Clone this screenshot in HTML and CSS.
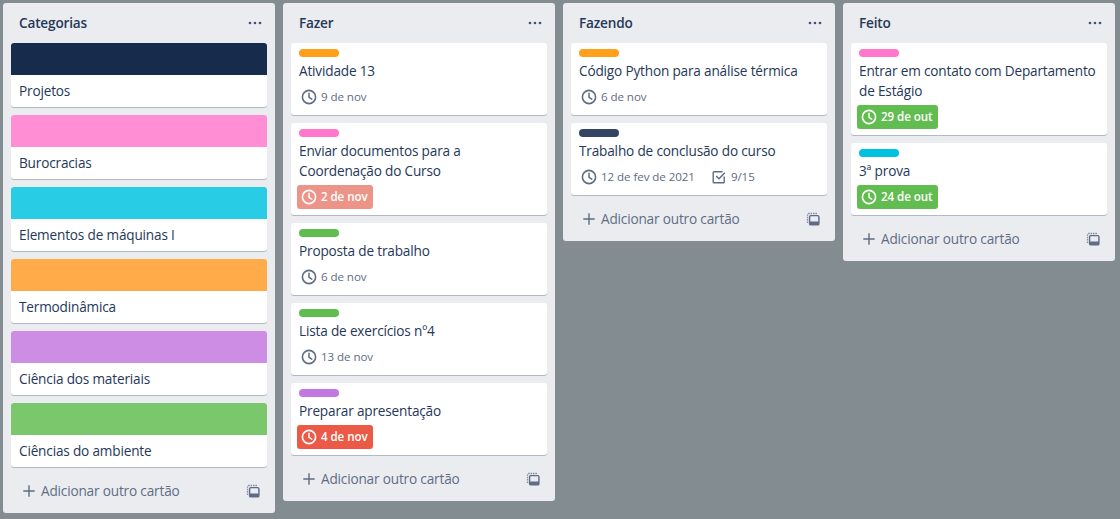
FILE: index.html
```html
<!DOCTYPE html>
<html lang="pt">
<head>
<meta charset="utf-8">
<title>Quadro</title>
<link rel="stylesheet" href="styles.css">
</head>
<body>
<svg class="defs" width="0" height="0" aria-hidden="true">
  <symbol id="clock" viewBox="0 0 16 16"><circle cx="8" cy="8" r="6.6" fill="none" stroke="currentColor" stroke-width="1.6"/><path d="M8 4.2V8.4L10.8 10.2" fill="none" stroke="currentColor" stroke-width="1.5" stroke-linecap="round" stroke-linejoin="round"/></symbol>
  <symbol id="check" viewBox="0 0 16 16"><path d="M13.2 7.5V13a.8.8 0 0 1-.8.8H3a.8.8 0 0 1-.8-.8V3.6a.8.8 0 0 1 .8-.8h8.5" fill="none" stroke="currentColor" stroke-width="1.4"/><path d="M5.2 7 8 9.8 13.8 3.8" fill="none" stroke="currentColor" stroke-width="1.5"/></symbol>
  <symbol id="plus" viewBox="0 0 16 16"><path d="M8 1.5v13M1.5 8h13" fill="none" stroke="currentColor" stroke-width="1.6"/></symbol>
  <symbol id="dots" viewBox="0 0 16 16"><circle cx="3" cy="8" r="1.35" fill="currentColor"/><circle cx="8" cy="8" r="1.35" fill="currentColor"/><circle cx="13" cy="8" r="1.35" fill="currentColor"/></symbol>
  <symbol id="tpl" viewBox="0 0 14 14"><path d="M1.5 11V2.5a1 1 0 0 1 1-1H11" fill="none" stroke="currentColor" stroke-width="1.3" stroke-dasharray="1.5 .9" opacity=".75"/><rect x="3.6" y="3.6" width="9.3" height="9.3" rx="1.2" fill="none" stroke="currentColor" stroke-width="1.4"/><rect x="3.6" y="9.6" width="9.3" height="3.3" rx=".8" fill="currentColor"/></symbol>
</svg>
<main class="board">

  <section class="list">
    <header class="list-head"><h2 class="list-title">Categorias</h2><svg class="dots"><use href="#dots"/></svg></header>
    <div class="cards">
      <article class="card"><div class="cover navy-cover"></div><p class="cover-title">Projetos</p></article>
      <article class="card"><div class="cover pink-cover"></div><p class="cover-title">Burocracias</p></article>
      <article class="card"><div class="cover sky-cover"></div><p class="cover-title">Elementos de máquinas I</p></article>
      <article class="card"><div class="cover orange-cover"></div><p class="cover-title">Termodinâmica</p></article>
      <article class="card"><div class="cover purple-cover"></div><p class="cover-title">Ciência dos materiais</p></article>
      <article class="card"><div class="cover green-cover"></div><p class="cover-title">Ciências do ambiente</p></article>
    </div>
    <footer class="list-foot"><svg class="plus"><use href="#plus"/></svg><span class="add">Adicionar outro cartão</span><svg class="tpl"><use href="#tpl"/></svg></footer>
  </section>

  <section class="list">
    <header class="list-head"><h2 class="list-title">Fazer</h2><svg class="dots"><use href="#dots"/></svg></header>
    <div class="cards">
      <article class="card body"><span class="label orange"></span><p class="title">Atividade 13</p><div class="badges"><span class="badge"><svg class="ico"><use href="#clock"/></svg>9 de nov</span></div></article>
      <article class="card body"><span class="label pink"></span><p class="title">Enviar documentos para a Coordenação do Curso</p><div class="badges"><span class="badge due soon"><svg class="ico"><use href="#clock"/></svg>2 de nov</span></div></article>
      <article class="card body"><span class="label green"></span><p class="title">Proposta de trabalho</p><div class="badges"><span class="badge"><svg class="ico"><use href="#clock"/></svg>6 de nov</span></div></article>
      <article class="card body"><span class="label green"></span><p class="title">Lista de exercícios nº4</p><div class="badges"><span class="badge"><svg class="ico"><use href="#clock"/></svg>13 de nov</span></div></article>
      <article class="card body"><span class="label purple"></span><p class="title">Preparar apresentação</p><div class="badges"><span class="badge due late"><svg class="ico"><use href="#clock"/></svg>4 de nov</span></div></article>
    </div>
    <footer class="list-foot"><svg class="plus"><use href="#plus"/></svg><span class="add">Adicionar outro cartão</span><svg class="tpl"><use href="#tpl"/></svg></footer>
  </section>

  <section class="list">
    <header class="list-head"><h2 class="list-title">Fazendo</h2><svg class="dots"><use href="#dots"/></svg></header>
    <div class="cards">
      <article class="card body"><span class="label orange"></span><p class="title">Código Python para análise térmica</p><div class="badges"><span class="badge"><svg class="ico"><use href="#clock"/></svg>6 de nov</span></div></article>
      <article class="card body"><span class="label navy"></span><p class="title">Trabalho de conclusão do curso</p><div class="badges"><span class="badge"><svg class="ico"><use href="#clock"/></svg>12 de fev de 2021</span><span class="badge"><svg class="ico"><use href="#check"/></svg>9/15</span></div></article>
    </div>
    <footer class="list-foot"><svg class="plus"><use href="#plus"/></svg><span class="add">Adicionar outro cartão</span><svg class="tpl"><use href="#tpl"/></svg></footer>
  </section>

  <section class="list">
    <header class="list-head"><h2 class="list-title">Feito</h2><svg class="dots"><use href="#dots"/></svg></header>
    <div class="cards">
      <article class="card body"><span class="label pink"></span><p class="title">Entrar em contato com Departamento de Estágio</p><div class="badges"><span class="badge due done"><svg class="ico"><use href="#clock"/></svg>29 de out</span></div></article>
      <article class="card body"><span class="label sky"></span><p class="title">3ª prova</p><div class="badges"><span class="badge due done"><svg class="ico"><use href="#clock"/></svg>24 de out</span></div></article>
    </div>
    <footer class="list-foot"><svg class="plus"><use href="#plus"/></svg><span class="add">Adicionar outro cartão</span><svg class="tpl"><use href="#tpl"/></svg></footer>
  </section>

</main>
</body>
</html>
```
FILE: styles.css
```css
* { box-sizing: border-box; }
html, body { margin: 0; height: 100%; }
body {
  background: #838c91;
  color: #253858;
  font-family: "Open Sans", "Noto Sans", sans-serif;
  font-size: 13.6px;
  letter-spacing: -0.17px;
  line-height: 20px;
  overflow: hidden;
}
.defs { position: absolute; }
.board {
  display: flex;
  align-items: flex-start;
  gap: 8px;
  padding: 3px 3px 0;
}
.list {
  width: 272px;
  flex: none;
  background: #ebecf0;
  border-radius: 3px;
}
.list-head {
  height: 40px;
  padding: 10px 12px 0 16px;
  display: flex;
  justify-content: space-between;
  align-items: flex-start;
}
.list-title {
  margin: 0;
  font-size: 13.6px;
  font-weight: 600;
  line-height: 20px;
}
.dots {
  width: 16px;
  height: 16px;
  margin-top: 2px;
  color: #42526e;
}
.cards {
  display: flex;
  flex-direction: column;
  gap: 8px;
  padding: 0 8px;
}
.card {
  background: #fff;
  border-radius: 3px;
  box-shadow: 0 1px 0 rgba(9, 30, 66, .25);
  overflow: hidden;
}
.card.body { padding: 6px 8px 6px; }
.cover { height: 32px; }
.navy-cover { background: #172b4d; }
.pink-cover { background: #ff8ed4; }
.sky-cover { background: #29cce5; }
.orange-cover { background: #ffab4a; }
.purple-cover { background: #cd8de5; }
.green-cover { background: #7bc86c; }
.cover-title { margin: 0; padding: 6px 8px; height: 32px; }
.label {
  display: block;
  width: 40px;
  height: 8px;
  border-radius: 4px;
  margin-bottom: 4px;
}
.orange { background: #ff9f1a; }
.pink { background: #ff78cb; }
.green { background: #61bd4f; }
.purple { background: #c377e0; }
.navy { background: #344563; }
.sky { background: #00c2e0; }
.title { margin: 0; }
.badges {
  display: flex;
  margin: 4px 0 0 -2px;
  gap: 4px;
}
.badge {
  display: inline-flex;
  align-items: center;
  height: 24px;
  padding: 0 4px;
  border-radius: 3px;
  font-size: 11.6px;
  letter-spacing: -0.08px;
  color: #5e6c84;
  white-space: nowrap;
}
.badge:nth-child(2) { margin-left: 4px; }
.ico {
  width: 16px;
  height: 16px;
  margin-right: 4px;
  flex: none;
}
.due { color: #fff; font-weight: 600; padding-right: 5px; }
.soon { background: #ec9488; }
.late { background: #eb5a46; }
.done { background: #61bd4f; }
.list-foot {
  height: 46px;
  padding: 2px 12px 0 19px;
  display: flex;
  align-items: center;
  color: #5e6c84;
}
.plus { width: 14px; height: 14px; flex: none; margin-right: 5px; }
.add { flex: 1; }
.tpl { width: 14px; height: 14px; flex: none; margin-right: 3px; }
```
